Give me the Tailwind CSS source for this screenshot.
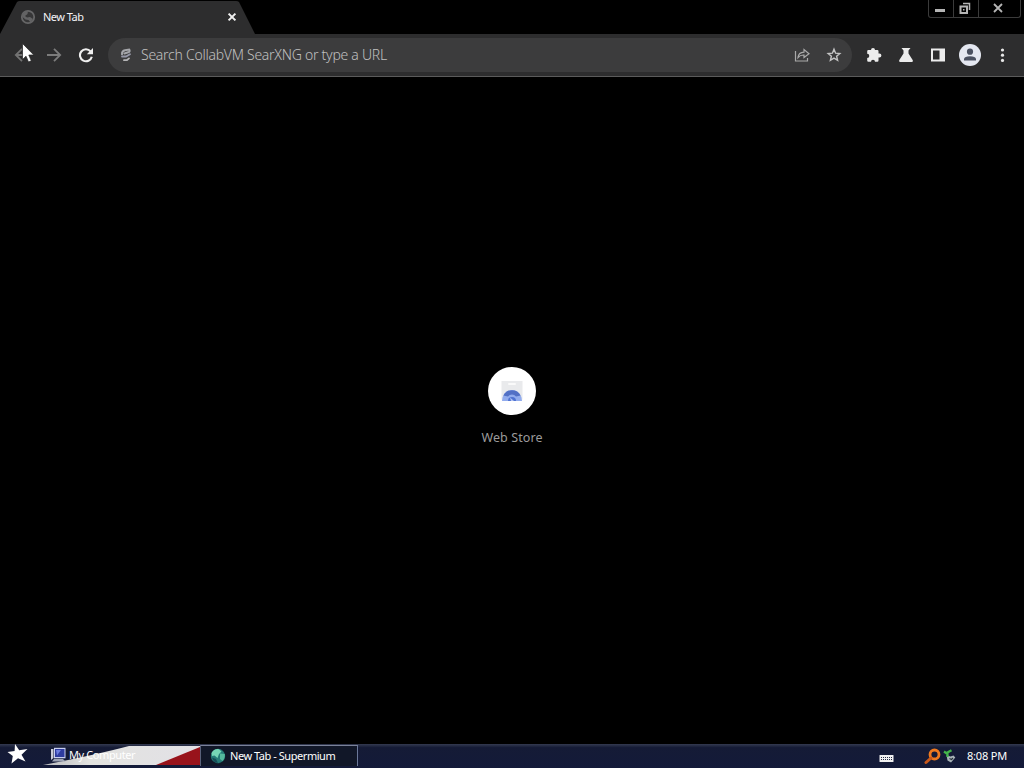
<!DOCTYPE html>
<html lang="en">
<head>
    <meta charset="UTF-8">
    <meta name="viewport" content="width=device-width, initial-scale=1.0">
    <title>New Tab</title>
    <script src="https://cdn.jsdelivr.net/npm/@tailwindcss/browser@4"></script>
</head>

<body class="bg-black font-['Noto_Sans',sans-serif]">
    <div class="relative w-[1024px] h-[768px] overflow-hidden flex flex-col bg-black cursor-default">

      <!-- Tab strip -->
      <div class="h-[34px] flex justify-between items-start">
        <div class="w-[256px] h-[34px] grid">
          <svg class="col-start-1 row-start-1" width="256" height="34" viewBox="0 0 256 34">
            <path d="M0 34 L17 2 Q18 1 20 1 H236 Q238 1 239 2 L255 34 Z" fill="#2d2d2e" />
          </svg>
          <div class="col-start-1 row-start-1 flex items-center pl-5 pr-[19px]">
            <svg width="16" height="16" viewBox="0 0 16 16">
              <circle cx="8" cy="8" r="6.2" fill="#363637" stroke="#666667" stroke-width="1.8" />
              <path d="M2 5 L5 2.5 L8 2 L7.5 5 L5 7 L7 8.5 L10 8 L13 10 L10.5 13.5 L8.5 11 L5.5 10.5 L2.5 8 Z" fill="#636364" />
            </svg>
            <span class="ml-[7px] w-[42px] text-[11px] leading-4 text-gray-100 whitespace-nowrap tracking-[-0.5px]">New Tab</span>
            <svg class="ml-auto" width="10" height="10" viewBox="0 0 10 10" stroke="#f1f1f1" stroke-width="2">
              <path d="M1.6 1.6 L8.4 8.4 M8.4 1.6 L1.6 8.4" />
            </svg>
          </div>
        </div>
        <div class="mr-[3px] h-[18px] w-[93px] flex border border-t-0 border-[#3b3b3b] rounded-b-[3px]">
          <div class="w-[25px] flex justify-center items-center border-r border-[#3b3b3b]">
            <div class="mt-[3px] mr-0.5 w-[10px] h-[3px] bg-[#b5b5b5]"></div>
          </div>
          <div class="w-[25px] flex justify-center items-center border-r border-[#3b3b3b]">
            <svg class="mr-[3px] mb-px" width="12" height="12" viewBox="0 0 12 12" fill="none" stroke="#b5b5b5">
              <path d="M4 1.5 H10.5 V8" stroke-width="1.5" />
              <rect x="1.5" y="4.5" width="6.5" height="6.5" stroke-width="2" />
              <rect x="4" y="7" width="1.5" height="1.5" fill="#b5b5b5" stroke="none" />
            </svg>
          </div>
          <div class="flex-1 flex justify-center items-center">
            <svg class="mr-[3px] mb-0.5" width="10" height="10" viewBox="0 0 10 10" stroke="#b5b5b5" stroke-width="1.8">
              <path d="M1 1 L9 9 M9 1 L1 9" />
            </svg>
          </div>
        </div>
      </div>

      <!-- Toolbar -->
      <div class="h-[43px] shrink-0 bg-[#2d2d2e] border-b border-[#5b5b5b] flex items-center">
        <div class="flex gap-4 pl-[14px]">
          <svg width="16" height="16" viewBox="0 0 16 16" fill="none" stroke="#727272" stroke-width="1.8">
            <path d="M15 8 H2 M8 1.8 L1.8 8 L8 14.2" />
          </svg>
          <svg width="16" height="16" viewBox="0 0 16 16" fill="none" stroke="#7c7c7c" stroke-width="1.8">
            <path d="M1 8 H14 M8 1.8 L14.2 8 L8 14.2" />
          </svg>
          <svg width="16" height="16" viewBox="0 0 16 16">
            <path d="M12.6 4.4 A6 6 0 1 0 13.8 9.7" fill="none" stroke="#efefef" stroke-width="2.1" />
            <path d="M15 1 V7.2 H8.8 Z" fill="#efefef" />
          </svg>
        </div>
        <div class="ml-[14px] w-[744px] h-[34px] rounded-full bg-[#3c3c3d] flex items-center pl-[11px] pr-[10px]">
          <svg width="14" height="16" viewBox="0 0 14 16" fill="none" stroke-linecap="round">
            <path d="M3 7.2 Q2.8 3.8 6 3.2 L10.2 2.6 Q11.3 4.2 9.8 5 L5.5 6.5" stroke="#a5a6aa" stroke-width="2" />
            <path d="M3 9.5 L7 9.5 L11 7.2" stroke="#9698a8" stroke-width="1.8" />
            <path d="M5 13.2 L8 13 L10 11.4" stroke="#b5b5b7" stroke-width="1.8" />
          </svg>
          <span class="ml-2 w-[247px] text-[14px] leading-5 font-light text-[#c0c0c0] whitespace-nowrap tracking-[-0.26px]">Search CollabVM SearXNG or type a URL</span>
          <svg class="ml-auto" width="16" height="16" viewBox="0 0 16 16" fill="none" stroke="#a9a9a9" stroke-width="1.2">
            <path d="M1.5 4 V14 H13.5 V11" />
            <path d="M4 10.5 Q4.5 5.5 10 5.2 V2.5 L15 6.7 L10 10.5 V8 Q6.2 7.8 4 10.5 Z" />
          </svg>
          <svg class="ml-4" width="16" height="16" viewBox="0 0 16 16" fill="none" stroke="#c4c4c4" stroke-width="1.4">
            <path d="M8 2.2 L9.6 6.2 L13.8 6.5 L10.6 9.2 L11.6 13.3 L8 11.1 L4.4 13.3 L5.4 9.2 L2.2 6.5 L6.4 6.2 Z" />
          </svg>
        </div>
        <div class="flex items-center ml-[14px]">
          <svg width="16" height="16" viewBox="0 0 16 16" fill="#ececec">
            <path d="M1.2 4.2 Q1.2 3 2.4 3 H5 A2 2 0 0 1 9 3 H11.3 Q12.5 3 12.5 4.2 V6.6 H13.4 A2 2 0 0 1 13.4 10.6 H12.5 V13.6 Q12.5 14.8 11.3 14.8 H9 A2 2 0 0 0 5 14.8 H2.4 Q1.2 14.8 1.2 13.6 V11 A2.1 2.1 0 0 0 1.2 6.8 Z" />
          </svg>
          <svg class="ml-4" width="16" height="16" viewBox="0 0 16 16" fill="#ececec">
            <path d="M3.5 1 H12.5 L10.5 3.5 V6.5 L14.8 13.2 Q15.5 15 13.8 15 H2.2 Q0.5 15 1.2 13.2 L5.5 6.5 V3.5 Z" />
          </svg>
          <svg class="ml-4" width="16" height="16" viewBox="0 0 16 16" fill="#ececec">
            <path fill-rule="evenodd" d="M1 1.5 H15 V14.5 H1 Z M3 3.5 V12.5 H9.5 V3.5 Z" />
          </svg>
          <svg class="ml-[13px]" width="22" height="22" viewBox="0 0 22 22">
            <circle cx="11" cy="11" r="11" fill="#e4e7f0" />
            <circle cx="11" cy="7.7" r="3.1" fill="#4a5060" />
            <path d="M5 16.5 V15 Q5.5 12.2 11 12.2 Q16.5 12.2 17 15 V16.5 Z" fill="#4a5060" />
          </svg>
          <svg class="ml-[19px]" width="5" height="16" viewBox="0 0 5 16" fill="#e8e8e8">
            <circle cx="2.5" cy="3" r="1.6" /><circle cx="2.5" cy="8.2" r="1.6" /><circle cx="2.5" cy="13.4" r="1.6" />
          </svg>
        </div>
      </div>

      <!-- New tab page -->
      <div class="flex-1 flex flex-col items-center pt-[290px]">
        <div class="size-12 rounded-full bg-white flex items-center justify-center">
          <svg width="24" height="24" viewBox="0 0 24 24">
            <path d="M1.5 2 H22.5 V20 Q22.5 22 20.5 22 H3.5 Q1.5 22 1.5 20 Z" fill="#e9eaec" />
            <rect x="8" y="4" width="8" height="2" rx="1" fill="#fafafa" />
            <path d="M2 22 A10 11 0 0 1 22 22 Z" fill="#91abed" />
            <path d="M3.3 16.5 A10 10.5 0 0 1 20.7 16.5 L16 17.5 A5 5 0 0 0 8 17.5 Z" fill="#5270c5" />
            <path d="M8 22 A4 4 0 0 1 16 22 Z" fill="#4f72d1" />
            <path d="M10 18.5 L14 22 H11 Z" fill="#b2c3f3" />
          </svg>
        </div>
        <span class="mt-[13px] text-[12.5px] leading-5 text-[#9b9b9b] tracking-[0.1px]">Web Store</span>
      </div>

      <!-- Taskbar -->
      <div class="h-6 shrink-0 flex bg-linear-to-b from-[#343a50] via-[#151b36] via-15% to-[#131a39] text-[11px] text-white">
        <div class="w-[200px] grid">
          <svg class="col-start-1 row-start-1" width="200" height="24" viewBox="0 0 200 24">
            <defs>
              <linearGradient id="stripe" x1="0" x2="1">
                <stop offset="0" stop-color="#b8b9bd" />
                <stop offset="0.3" stop-color="#e3e3e0" />
                <stop offset="1" stop-color="#e2e1e6" />
              </linearGradient>
            </defs>
            <path d="M43 21 Q95 11 129 2 H200 V21 Z" fill="url(#stripe)" />
            <path d="M156 21 L200 3 V21 Z" fill="#98131b" />
            <path d="M15 0 L19.2 6.2 L27.5 5 L21.5 10.7 L25.5 17.5 L18 14.3 L11.5 19.5 L12.8 12 L7.5 8 L14.6 7 Z" fill="#fff" />
          </svg>
          <div class="col-start-1 row-start-1 flex items-start pl-[50px] pt-[3px]">
            <svg width="17" height="16" viewBox="0 0 17 16">
              <path d="M1 2 H3.5 V11 L1 13 Z" fill="#c8cbd8" />
              <rect x="4" y="0.8" width="11.5" height="10.5" fill="#c8cff0" />
              <rect x="5" y="2" width="9.5" height="8" fill="#2e3c9f" />
              <path d="M6 3 H11 L7 8.5 Z" fill="#6b7ce0" />
              <path d="M4 12 H13 L15.5 14.5 H2 Z" fill="#9da3b4" />
            </svg>
            <span class="ml-0.5 leading-4 whitespace-nowrap tracking-[-0.4px]">My Computer</span>
          </div>
        </div>
        <div class="w-[158px] h-[21px] mt-px flex items-center pl-[9px] border-l border-t border-r border-t-[#7a8198] border-l-[#59617a] border-r-[#6b7899] bg-[#111728]">
          <svg width="16" height="16" viewBox="0 0 16 16">
            <circle cx="8" cy="8" r="7.2" fill="#267c78" />
            <path d="M1.5 5 Q4 0.5 9 1.2 L11.5 3.5 L9 6 L7.5 10 L4.5 7.5 L2 8 Z" fill="#76d6b6" />
            <path d="M10 5.5 L14.8 6 Q15.3 10 12.5 13 L10 11 Z" fill="#55b99d" />
            <path d="M2 9.5 L6 11 L8 15 Q3.5 14.5 2 9.5 Z" fill="#154e57" />
          </svg>
          <span class="ml-[4px] leading-4 whitespace-nowrap tracking-[-0.45px]">New Tab - Supermium</span>
        </div>
        <div class="ml-auto flex items-center pr-[17px]">
          <svg class="mt-1" width="15" height="9" viewBox="0 0 15 9">
            <rect x="0.5" y="1" width="14" height="7" rx="0.5" fill="#f0f0f0" />
            <path d="M2 3.5 H13 M2 5.5 H13" stroke="#252b43" stroke-dasharray="1 1" />
          </svg>
          <svg class="ml-[30px]" width="17" height="17" viewBox="0 0 17 17" fill="none">
            <circle cx="10.5" cy="6.5" r="4.5" stroke="#ee791f" stroke-width="2.8" />
            <path d="M7 10 L2 14.5" stroke="#c8581b" stroke-width="3" stroke-linecap="round" />
          </svg>
          <svg class="ml-0.5" width="14" height="16" viewBox="0 0 14 16">
            <path d="M3.5 7 L7.5 8.5 L10.5 7.5 L12.3 9.5 L8 14.5 L4.5 12.5 Z" fill="#a9b4b8" />
            <path d="M6.5 10.5 L8.5 11.5 L10 10" fill="none" stroke="#28343d" stroke-width="1.1" />
            <path d="M4.5 9 V4.5 L8.5 2.2 M1 3.5 L4.5 6" fill="none" stroke="#43b54a" stroke-width="2.2" />
          </svg>
          <span class="ml-[10px] w-[40px] leading-4 whitespace-nowrap tracking-[-0.2px]">8:08 PM</span>
        </div>
      </div>

      <!-- Mouse pointer -->
      <svg class="absolute left-[22px] top-[43px]" width="13" height="20" viewBox="0 0 13 20">
        <path d="M0.5 0.5 V16.5 L4 13.2 L6.5 19 L9.3 17.8 L6.8 12 H11.8 Z" fill="#fff" stroke="#222" stroke-width="0.7" />
      </svg>
    </div>
</body>
</html>
